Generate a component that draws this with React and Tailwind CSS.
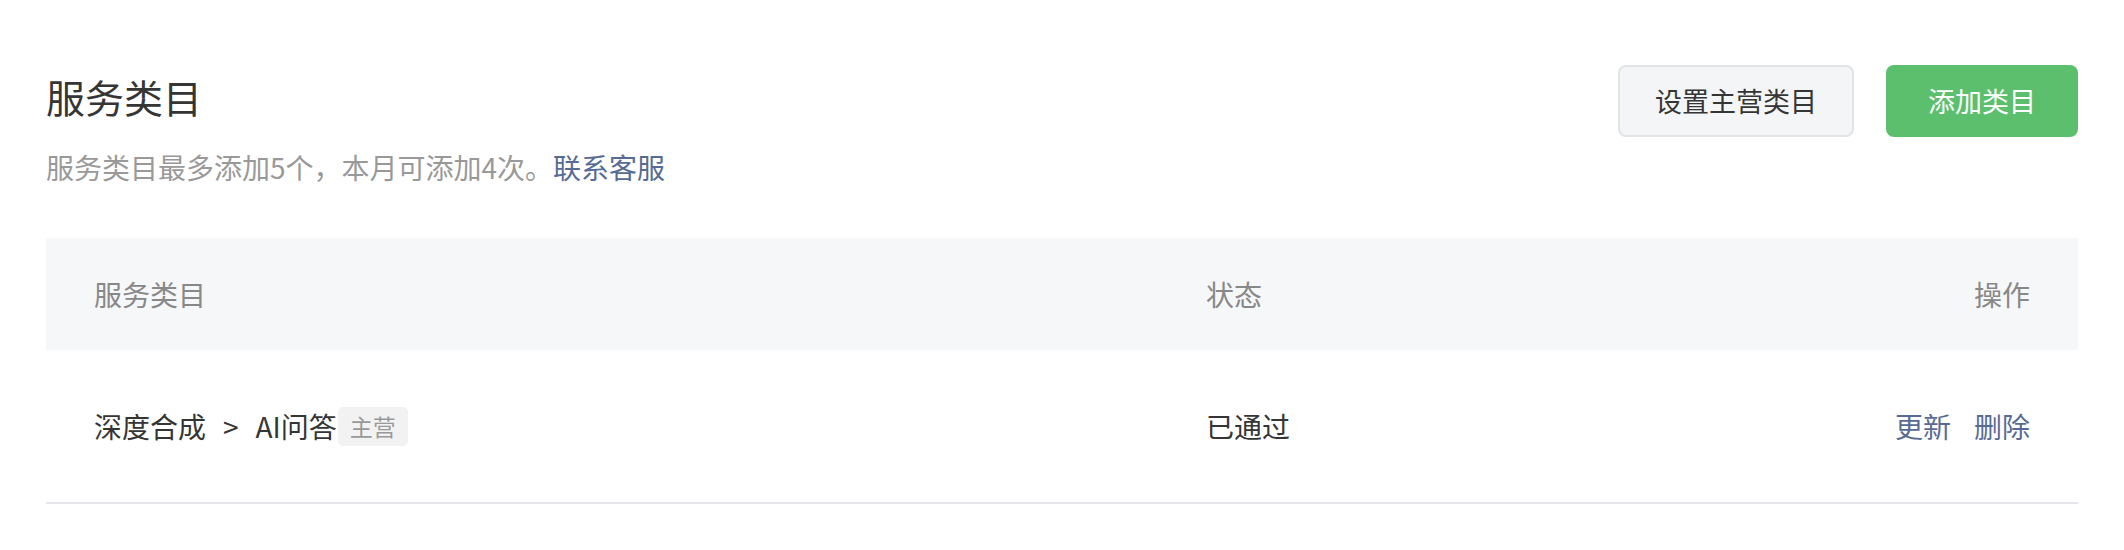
export default function App() {
  const font = { fontFamily: '"Noto Sans CJK SC", "Noto Sans", sans-serif' };

  return (
    <div className="w-[2124px] h-[550px] bg-white px-[46px] pt-[65px] text-[#353535]" style={font}>
      <div className="flex items-start justify-between">
        <div className="pt-[7px]">
          <h1 className="text-[39px] leading-[48px] font-normal">服务类目</h1>
          <p className="mt-[27px] text-[28px] leading-[40px] text-[#999999]">
            服务类目最多添加5个，本月可添加4次。
            <a className="text-[#576b95] cursor-pointer">联系客服</a>
          </p>
        </div>
        <div className="flex gap-[32px]">
          <button className="w-[236px] h-[72px] rounded-[8px] border-2 border-[#e3e4e6] bg-[#f4f5f7] text-[27px] text-[#353535]">
            设置主营类目
          </button>
          <button className="w-[192px] h-[72px] rounded-[8px] bg-[#5bbf6d] text-[27px] text-white">
            添加类目
          </button>
        </div>
      </div>

      <div className="mt-[51px] text-[28px]">
        <div className="flex items-center h-[112px] bg-[#f6f7f9] px-[48px] text-[#888888]">
          <div className="w-[1112px]">服务类目</div>
          <div className="flex-1">状态</div>
          <div>操作</div>
        </div>
        <div className="flex items-center h-[154px] border-b-2 border-[#e5e6ea] px-[48px]">
          <div className="w-[1112px] flex items-center">
            <span>深度合成</span>
            <span className="mx-[17px]">&gt;</span>
            <span>AI问答</span>
            <span className="ml-[1px] h-[39px] px-[12px] rounded-[5px] bg-[#f2f2f2] text-[23px] leading-[39px] text-[#999999]">
              主营
            </span>
          </div>
          <div className="flex-1">已通过</div>
          <div className="flex gap-[23px] text-[#576b95]">
            <a className="cursor-pointer">更新</a>
            <a className="cursor-pointer">删除</a>
          </div>
        </div>
      </div>
    </div>
  );
}
